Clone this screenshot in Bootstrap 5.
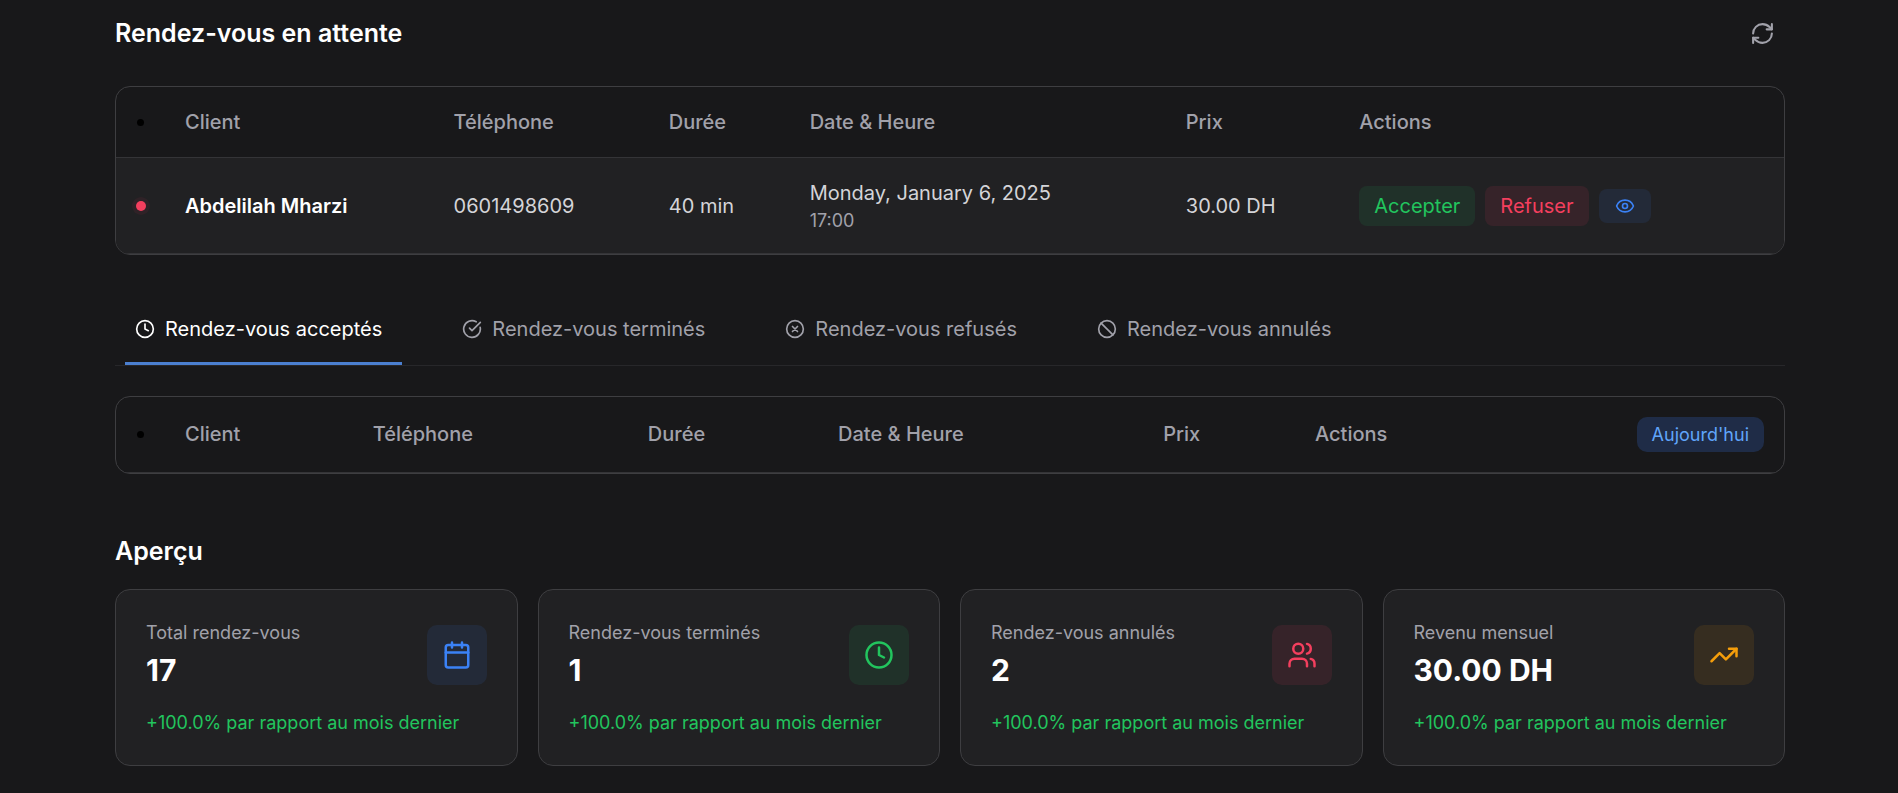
<!DOCTYPE html>
<html lang="fr" data-bs-theme="dark">
<head>
<meta charset="utf-8">
<meta name="viewport" content="width=device-width, initial-scale=1">
<title>Rendez-vous</title>
<link href="https://cdn.jsdelivr.net/npm/bootstrap@5.3.0/dist/css/bootstrap.min.css" rel="stylesheet">
<style>
  :root { --page: #18181a; --panel: #212123; --line: #3e3e41; --rule: #343437; --muted: #a1a1aa; --soft: #d4d4d8;
    --blue: #3b82f6; --green: #22c55e; --red: #f43f5e; --amber: #f59e0b; }
  body { background: var(--page); color: #fff; font-family: Inter, "Liberation Sans", sans-serif; font-size: 20px; line-height: 30px; }
  .page { padding: 11px 113px 26px 115px; }
  svg { fill: none; stroke: currentColor; stroke-width: 2; stroke-linecap: round; stroke-linejoin: round; display: block; flex: none; }
  .ic-20 { width: 20px; height: 20px; }
  .ic-25 { width: 25px; height: 25px; }
  .ic-30 { width: 30px; height: 30px; }
  .section-title { font-size: 25px; line-height: 35px; font-weight: 600; margin: 0; }
  .refresh { color: var(--muted); padding: 10px; border: 0; }
  .panel { border: 1px solid var(--line); border-radius: 15px; overflow: hidden; }
  .pending { margin-top: 30px; }
  .panel .table { --bs-table-bg: transparent; margin: 0; min-width: 1100px; table-layout: fixed; }
  .panel th, .panel td { padding: 20px; border-bottom: 1px solid var(--rule); vertical-align: middle; }
  .panel th { color: var(--muted); font-weight: 500; }
  .panel td { color: var(--soft); }
  .panel tbody tr { background: var(--panel); }
  .panel .tall th { height: 75px; padding-top: 0; padding-bottom: 0; }
  .w-dot { width: 49px; }
  .dot { display: block; width: 7px; height: 7px; margin-left: 1px; border-radius: 50%; background: #000; }
  .dot-new { width: 10px; height: 10px; margin-left: 0; background: var(--red); box-shadow: 0 0 0 4px rgba(244, 63, 94, .07); }
  .panel .client { color: #fff; font-weight: 600; }
  .hour { color: var(--muted); font-size: 18px; line-height: 25px; }
  .actions { gap: 10px; }
  .act { border: 0; border-radius: 8px; font-size: 20px; line-height: 30px; padding: 5px 15px; }
  .act-eye { padding: 7px 16px; }
  .tint-blue { color: var(--blue); background: rgba(59, 130, 246, .1); }
  .tint-green { color: var(--green); background: rgba(34, 197, 94, .1); }
  .tint-red { color: var(--red); background: rgba(244, 63, 94, .1); }
  .tint-amber { color: var(--amber); background: rgba(245, 158, 11, .1); }
  .tabs { margin: 40px 0 30px; padding: 0 10px; column-gap: 50px; border-bottom: 1px solid #27272a; }
  .tabs .nav-link { display: flex; align-items: center; gap: 10px; padding: 18px 20px 18px 10px;
    border: 0; border-bottom: 3px solid transparent; border-radius: 0; background: none; color: var(--muted); font-weight: 400; height: 70px; }
  .tabs .nav-link.active { color: #fff; border-bottom-color: #4b7fd0; }
  .today { border: 0; border-radius: 10px; background: #1f2c47; color: #60a5fa; font-size: 18px; line-height: 25px; font-weight: 400; padding: 5px 15px; }
  .overview { margin-top: 60px; }
  .overview .section-title { margin-bottom: 20px; }
  .stats { --bs-gutter-x: 20px; --bs-gutter-y: 20px; }
  .stat { background: var(--panel); border: 1px solid var(--line); border-radius: 15px; padding: 30px; }
  .stat-label { color: var(--muted); font-size: 18px; line-height: 25px; margin-bottom: 5px; }
  .stat-value { font-size: 30px; line-height: 40px; font-weight: 700; }
  .stat-icon { width: 60px; height: 60px; border-radius: 10px; }
  .stat-delta { color: var(--green); font-size: 18px; line-height: 25px; margin-top: 20px; }
  @media (max-width: 1199px) { .page { padding-left: 20px; padding-right: 20px; } }
</style>
</head>
<body>
<main class="page container-fluid">
  <section>
    <div class="d-flex justify-content-between align-items-center">
      <h2 class="section-title">Rendez-vous en attente</h2>
      <button type="button" class="btn refresh" aria-label="Actualiser">
        <svg class="ic-25" viewBox="0 0 24 24"><path d="M3 12a9 9 0 0 1 9-9 9.75 9.75 0 0 1 6.74 2.74L21 8"/><path d="M21 3v5h-5"/><path d="M21 12a9 9 0 0 1-9 9 9.75 9.75 0 0 1-6.74-2.74L3 16"/><path d="M8 16H3v5"/></svg>
      </button>
    </div>
    <div class="panel pending table-responsive">
      <table class="table">
        <colgroup><col class="w-dot"><col style="width:16.1%"><col style="width:12.9%"><col style="width:8.45%"><col style="width:22.55%"><col style="width:10.4%"><col></colgroup>
        <thead>
          <tr><td><span class="dot"></span></td><th scope="col">Client</th><th scope="col">Téléphone</th><th scope="col">Durée</th><th scope="col">Date &amp; Heure</th><th scope="col">Prix</th><th scope="col">Actions</th></tr>
        </thead>
        <tbody>
          <tr>
            <td><span class="dot dot-new"></span></td>
            <td class="client">Abdelilah Mharzi</td>
            <td>0601498609</td>
            <td>40 min</td>
            <td><div>Monday, January 6, 2025</div><div class="hour">17:00</div></td>
            <td>30.00 DH</td>
            <td class="py-0">
              <div class="d-flex align-items-center actions">
                <button type="button" class="btn act tint-green">Accepter</button>
                <button type="button" class="btn act tint-red">Refuser</button>
                <button type="button" class="btn act act-eye tint-blue" aria-label="Voir">
                  <svg class="ic-20" viewBox="0 0 24 24"><path d="M2.062 12.348a1 1 0 0 1 0-.696 10.75 10.75 0 0 1 19.876 0 1 1 0 0 1 0 .696 10.75 10.75 0 0 1-19.876 0"/><circle cx="12" cy="12" r="3"/></svg>
                </button>
              </div>
            </td>
          </tr>
        </tbody>
      </table>
    </div>
  </section>

  <section>
    <div class="nav tabs" role="tablist">
      <button type="button" class="nav-link active" role="tab" aria-selected="true">
        <svg class="ic-20" viewBox="0 0 24 24"><circle cx="12" cy="12" r="10"/><path d="M12 6v6l4 2"/></svg>Rendez-vous acceptés</button>
      <button type="button" class="nav-link" role="tab" aria-selected="false">
        <svg class="ic-20" viewBox="0 0 24 24"><path d="M21.801 10A10 10 0 1 1 17 3.335"/><path d="m9 11 3 3L22 4"/></svg>Rendez-vous terminés</button>
      <button type="button" class="nav-link" role="tab" aria-selected="false">
        <svg class="ic-20" viewBox="0 0 24 24"><circle cx="12" cy="12" r="10"/><path d="m15 9-6 6M9 9l6 6"/></svg>Rendez-vous refusés</button>
      <button type="button" class="nav-link" role="tab" aria-selected="false">
        <svg class="ic-20" viewBox="0 0 24 24"><circle cx="12" cy="12" r="10"/><path d="m4.900 4.900 14.200 14.200"/></svg>Rendez-vous annulés</button>
    </div>
    <div class="panel table-responsive">
      <table class="table">
        <colgroup><col class="w-dot"><col style="width:11.25%"><col style="width:16.5%"><col style="width:11.4%"><col style="width:19.5%"><col style="width:9.1%"><col></colgroup>
        <thead class="tall">
          <tr><td><span class="dot"></span></td><th scope="col">Client</th><th scope="col">Téléphone</th><th scope="col">Durée</th><th scope="col">Date &amp; Heure</th><th scope="col">Prix</th>
            <th scope="col"><div class="d-flex justify-content-between align-items-center">Actions<button type="button" class="btn today">Aujourd'hui</button></div></th></tr>
        </thead>
      </table>
    </div>
  </section>

  <section class="overview">
    <h2 class="section-title">Aperçu</h2>
    <div class="row stats">
      <div class="col-12 col-sm-6 col-xl-3"><div class="stat">
        <div class="d-flex justify-content-between align-items-center">
          <div><div class="stat-label">Total rendez-vous</div><div class="stat-value">17</div></div>
          <div class="stat-icon tint-blue d-flex align-items-center justify-content-center"><svg class="ic-30" viewBox="0 0 24 24"><path d="M8 2v4M16 2v4"/><rect x="3" y="4" width="18" height="18" rx="2"/><path d="M3 10h18"/></svg></div>
        </div>
        <div class="stat-delta">+100.0% par rapport au mois dernier</div>
      </div></div>
      <div class="col-12 col-sm-6 col-xl-3"><div class="stat">
        <div class="d-flex justify-content-between align-items-center">
          <div><div class="stat-label">Rendez-vous terminés</div><div class="stat-value">1</div></div>
          <div class="stat-icon tint-green d-flex align-items-center justify-content-center"><svg class="ic-30" viewBox="0 0 24 24"><circle cx="12" cy="12" r="10"/><path d="M12 6v6l4 2"/></svg></div>
        </div>
        <div class="stat-delta">+100.0% par rapport au mois dernier</div>
      </div></div>
      <div class="col-12 col-sm-6 col-xl-3"><div class="stat">
        <div class="d-flex justify-content-between align-items-center">
          <div><div class="stat-label">Rendez-vous annulés</div><div class="stat-value">2</div></div>
          <div class="stat-icon tint-red d-flex align-items-center justify-content-center"><svg class="ic-30" viewBox="0 0 24 24"><path d="M16 21v-2a4 4 0 0 0-4-4H6a4 4 0 0 0-4 4v2"/><circle cx="9" cy="7" r="4"/><path d="M22 21v-2a4 4 0 0 0-3-3.87M16 3.13a4 4 0 0 1 0 7.75"/></svg></div>
        </div>
        <div class="stat-delta">+100.0% par rapport au mois dernier</div>
      </div></div>
      <div class="col-12 col-sm-6 col-xl-3"><div class="stat">
        <div class="d-flex justify-content-between align-items-center">
          <div><div class="stat-label">Revenu mensuel</div><div class="stat-value">30.00 DH</div></div>
          <div class="stat-icon tint-amber d-flex align-items-center justify-content-center"><svg class="ic-30" viewBox="0 0 24 24"><path d="M22 7l-8.500 8.500-5-5L2 17"/><path d="M16 7h6v6"/></svg></div>
        </div>
        <div class="stat-delta">+100.0% par rapport au mois dernier</div>
      </div></div>
    </div>
  </section>
</main>
<script src="https://cdn.jsdelivr.net/npm/bootstrap@5.3.0/dist/js/bootstrap.bundle.min.js"></script>
</body>
</html>
